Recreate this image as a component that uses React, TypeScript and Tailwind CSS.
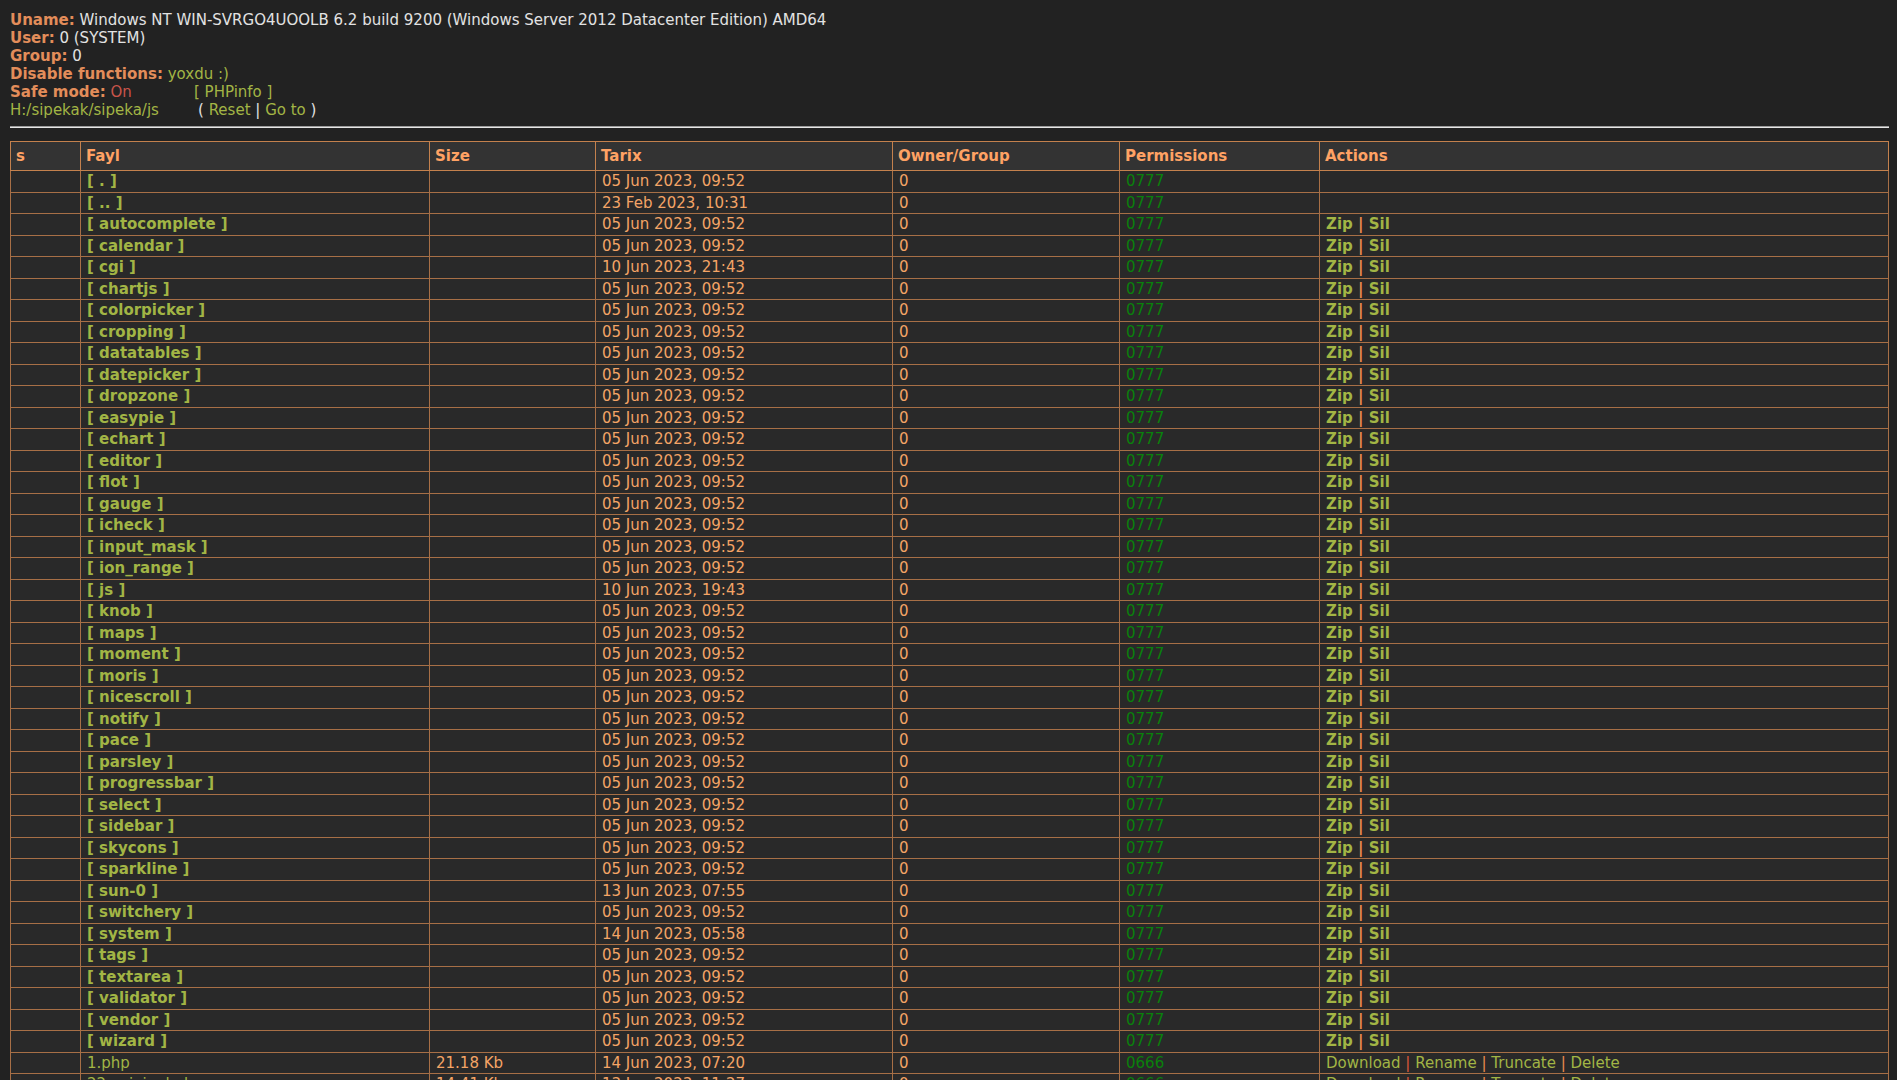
import React from "react";

type Row = {
  name: string;
  dir: boolean;
  size?: string;
  date: string;
  perms: string;
  actions: "none" | "dir" | "file";
};

const J = "05 Jun 2023, 09:52";

const dirs: [string, string][] = [
  ["autocomplete", J],
  ["calendar", J],
  ["cgi", "10 Jun 2023, 21:43"],
  ["chartjs", J],
  ["colorpicker", J],
  ["cropping", J],
  ["datatables", J],
  ["datepicker", J],
  ["dropzone", J],
  ["easypie", J],
  ["echart", J],
  ["editor", J],
  ["flot", J],
  ["gauge", J],
  ["icheck", J],
  ["input_mask", J],
  ["ion_range", J],
  ["js", "10 Jun 2023, 19:43"],
  ["knob", J],
  ["maps", J],
  ["moment", J],
  ["moris", J],
  ["nicescroll", J],
  ["notify", J],
  ["pace", J],
  ["parsley", J],
  ["progressbar", J],
  ["select", J],
  ["sidebar", J],
  ["skycons", J],
  ["sparkline", J],
  ["sun-0", "13 Jun 2023, 07:55"],
  ["switchery", J],
  ["system", "14 Jun 2023, 05:58"],
  ["tags", J],
  ["textarea", J],
  ["validator", J],
  ["vendor", J],
  ["wizard", J],
];

const rows: Row[] = [
  { name: ".", dir: true, date: J, perms: "0777", actions: "none" },
  { name: "..", dir: true, date: "23 Feb 2023, 10:31", perms: "0777", actions: "none" },
  ...dirs.map(([name, date]) => ({ name, dir: true, date, perms: "0777", actions: "dir" as const })),
  { name: "1.php", dir: false, size: "21.18 Kb", date: "14 Jun 2023, 07:20", perms: "0666", actions: "file" },
  { name: "22_original.php", dir: false, size: "14.41 Kb", date: "13 Jun 2023, 11:27", perms: "0666", actions: "file" },
];

const Pipe = ({ first }: { first?: boolean }) => (
  <span className={first ? "text-[#d9583a]" : "text-[#ec8c4f]"}> | </span>
);

const Label = ({ children }: { children: React.ReactNode }) => (
  <span className="font-bold text-[#e38d5a]">{children}</span>
);

const th = "border border-[#c4814d] bg-[#333333] px-[5px] py-[5px] text-left font-bold leading-[18px] text-[#ffa264]";
const td = "border border-[#a76f46] px-[6px] py-px leading-[18.5px] whitespace-nowrap";

export default function App() {
  return (
    <div className="h-[1080px] overflow-hidden bg-[#222222] pl-[10px] pr-[8px] pt-[11px] font-['DejaVu_Sans','Verdana',sans-serif] text-[15px] text-[#e2e2e2]">
      <div className="leading-[18px]">
        <div>
          <Label>Uname:</Label> Windows NT WIN-SVRGO4UOOLB 6.2 build 9200 (Windows Server 2012 Datacenter Edition) AMD64
        </div>
        <div>
          <Label>User:</Label> 0 (SYSTEM)
        </div>
        <div>
          <Label>Group:</Label> 0
        </div>
        <div>
          <Label>Disable functions:</Label> <span className="text-[#a2b545]">yoxdu :)</span>
        </div>
        <div className="flex">
          <span className="w-[184px]">
            <Label>Safe mode:</Label> <span className="text-[#c9544a]">On</span>
          </span>
          <span className="text-[#a2b545]">[ PHPinfo ]</span>
        </div>
        <div className="flex">
          <span className="w-[188px] text-[#a2b545]">H:/sipekak/sipeka/js</span>
          <span>
            ( <span className="text-[#a2b545]">Reset</span> | <span className="text-[#a2b545]">Go to</span> )
          </span>
        </div>
      </div>

      <div className="mt-[7px] h-[2px] border-t border-[#9a9a9a] bg-[#e6e6e6]" />

      <table className="mt-[13px] w-full table-fixed border-collapse bg-[#292929]">
        <colgroup>
          <col className="w-[70px]" />
          <col className="w-[349px]" />
          <col className="w-[166px]" />
          <col className="w-[297px]" />
          <col className="w-[227px]" />
          <col className="w-[200px]" />
          <col />
        </colgroup>
        <thead>
          <tr>
            <th className={th}>s</th>
            <th className={th}>Fayl</th>
            <th className={th}>Size</th>
            <th className={th}>Tarix</th>
            <th className={th}>Owner/Group</th>
            <th className={th}>Permissions</th>
            <th className={th}>Actions</th>
          </tr>
        </thead>
        <tbody>
          {rows.map((r) => (
            <tr key={r.name}>
              <td className={td}></td>
              <td className={td}>
                {r.dir ? (
                  <span className="font-bold text-[#a2b545]">[ {r.name} ]</span>
                ) : (
                  <span className="text-[#a2b545]">{r.name}</span>
                )}
              </td>
              <td className={`${td} text-[#f4a466]`}>{r.size}</td>
              <td className={`${td} text-[#f4a466]`}>{r.date}</td>
              <td className={`${td} text-[#f4a466]`}>0</td>
              <td className={`${td} text-[#0a800c]`}>{r.perms}</td>
              <td className={`${td} text-[#a2b545]`}>
                {r.actions === "dir" && (
                  <span className="font-bold">
                    Zip<Pipe />Sil
                  </span>
                )}
                {r.actions === "file" && (
                  <span>
                    Download<Pipe first />Rename<Pipe />Truncate<Pipe />Delete
                  </span>
                )}
              </td>
            </tr>
          ))}
        </tbody>
      </table>
    </div>
  );
}
